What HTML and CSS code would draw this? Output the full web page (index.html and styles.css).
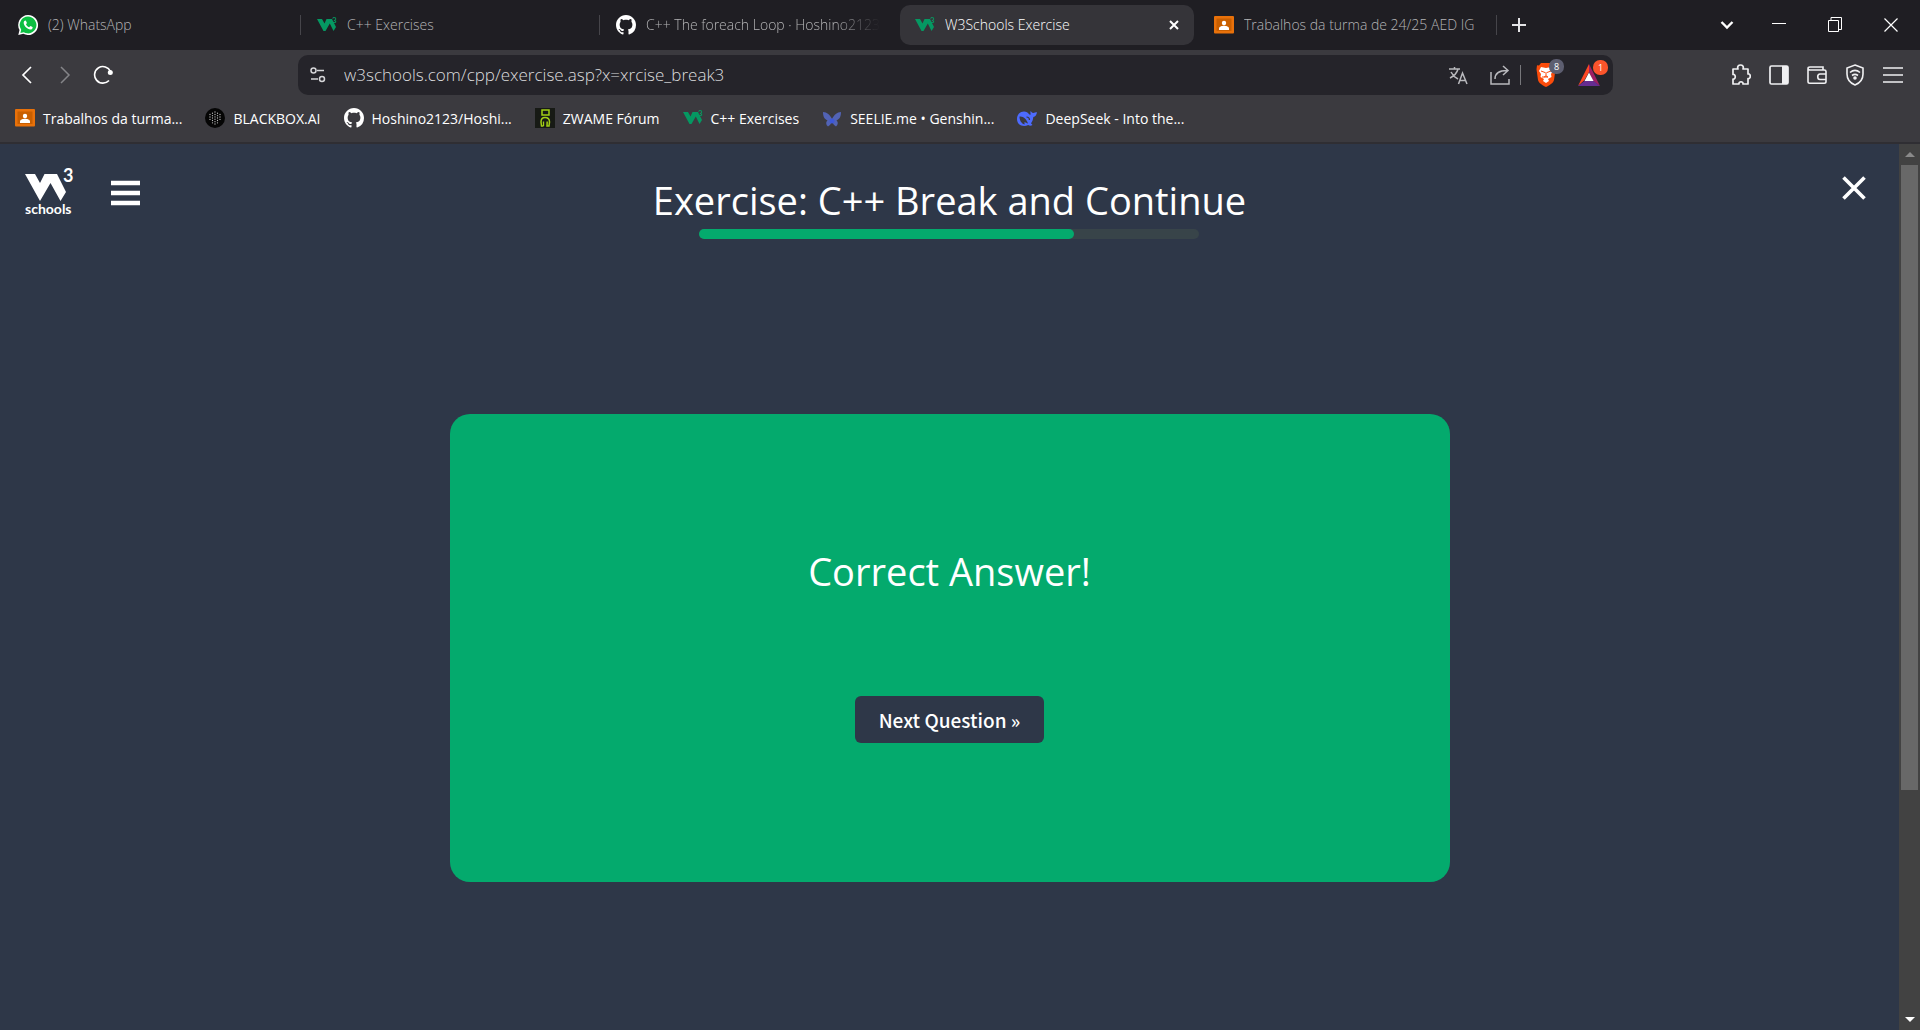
FILE: index.html
```html
<!DOCTYPE html>
<html lang="en">
<head>
<meta charset="utf-8">
<title>W3Schools Exercise</title>
<link rel="stylesheet" href="styles.css">
</head>
<body>
<svg class="defs" aria-hidden="true">
  <symbol id="w3" viewBox="0 0 20 20">
    <path d="M0 4h5l2.500 4.500L9.500 4h5.500l4 8-2.500 4-3.700-7.500L8.500 16H6.500z" fill="#059862"/>
    <text x="15" y="8" font-family="Lato" font-size="8" font-weight="700" fill="#059862">3</text>
  </symbol>
  <symbol id="github" viewBox="0 0 16 16">
    <path fill="#fff" d="M8 0C3.580 0 0 3.580 0 8c0 3.540 2.290 6.530 5.470 7.590.4.070.55-.17.55-.38 0-.19-.01-.82-.01-1.490-2.010.37-2.530-.49-2.690-.94-.09-.23-.48-.94-.82-1.130-.28-.15-.68-.52-.01-.53.63-.01 1.080.58 1.230.82.72 1.210 1.870.87 2.330.66.07-.52.28-.87.51-1.070-1.780-.2-3.640-.89-3.640-3.950 0-.87.31-1.590.82-2.150-.08-.2-.36-1.020.08-2.120 0 0 .67-.21 2.200.82.64-.18 1.320-.27 2-.27s1.360.09 2 .27c1.530-1.040 2.200-.82 2.200-.82.44 1.100.16 1.920.08 2.120.51.56.82 1.270.82 2.150 0 3.070-1.870 3.750-3.650 3.950.29.25.54.73.54 1.480 0 1.070-.01 1.930-.01 2.200 0 .21.15.46.55.38A8.010 8.010 0 0 0 16 8c0-4.420-3.580-8-8-8z"/>
  </symbol>
  <symbol id="classroom" viewBox="0 0 20 20">
    <rect y="1" width="20" height="17.500" rx="1" fill="#e8710a"/>
    <rect x="2.500" y="3.500" width="15" height="12.500" fill="#c95f00"/>
    <circle cx="10" cy="8" r="2.200" fill="#fff"/>
    <path d="M5 15v-1.500c0-2 3-2.800 5-2.800s5 .8 5 2.800V15z" fill="#fff"/>
  </symbol>
</svg>

<header class="browser">
  <div class="tabstrip">
    <nav class="tabs" aria-label="Tabs">
      <a class="tab" href="#">
        <svg class="fav" viewBox="0 0 20 20"><path d="M10 0a10 10 0 1 1-4.700 18.800L.3 20l1.200-5A10 10 0 0 1 10 0z" fill="#fff"/><path d="M10 1.600a8.400 8.400 0 1 1-4.300 15.600L2.400 18l.8-3.200A8.400 8.400 0 0 1 10 1.600z" fill="#0cbf42"/><path d="M7.300 5.500c-.4 0-1.600.7-1.600 2.300 0 3 3.600 6.600 6.700 6.700 1.200 0 2.300-.9 2.300-2.100 0-.3-2-1.300-2.300-1.300s-.9 1.200-1.200 1.200c-.8 0-3-2-3.200-3 0-.3.900-.8.900-1.200 0-.3-.8-2.600-1.600-2.600z" fill="#fff"/></svg>
        <span class="tab-title">(2) WhatsApp</span>
      </a>
      <a class="tab ruled" href="#"><svg class="fav"><use href="#w3"/></svg><span class="tab-title">C++ Exercises</span></a>
      <a class="tab ruled" href="#"><svg class="fav"><use href="#github"/></svg><span class="tab-title faded">C++ The foreach Loop · Hoshino2123</span></a>
      <div class="tab active">
        <svg class="fav"><use href="#w3"/></svg><span class="tab-title">W3Schools Exercise</span>
        <button class="icon-btn tab-close" aria-label="Close tab"><svg width="10" height="10" viewBox="0 0 10 10"><path d="M1 1l8 8M9 1L1 9" stroke="#fff" stroke-width="2"/></svg></button>
      </div>
      <a class="tab" href="#"><svg class="fav"><use href="#classroom"/></svg><span class="tab-title">Trabalhos da turma de 24/25 AED IG</span></a>
      <div class="tab-end"><button class="icon-btn" aria-label="New tab"><svg width="14" height="14" viewBox="0 0 14 14"><path d="M7 0v14M0 7h14" stroke="#e4e4e6" stroke-width="2"/></svg></button></div>
    </nav>
    <div class="window-controls">
      <button class="icon-btn" aria-label="Search tabs"><svg width="14" height="10" viewBox="0 0 14 10"><path d="M1.500 2L7 7.500 12.500 2" fill="none" stroke="#fff" stroke-width="2.400"/></svg></button>
      <button class="icon-btn" aria-label="Minimize"><svg width="14" height="14" viewBox="0 0 14 14"><path d="M0 5.500h14" stroke="#fff"/></svg></button>
      <button class="icon-btn" aria-label="Restore"><svg width="14" height="16" viewBox="0 0 14 16"><path d="M.5 3.500h10v11H.5zM3 3V.5h10.500v12H11" fill="none" stroke="#fff"/></svg></button>
      <button class="icon-btn" aria-label="Close window"><svg width="14" height="14" viewBox="0 0 14 14"><path d="M.5.500l13 13M13.500.500l-13 13" stroke="#fff" stroke-width="1.200"/></svg></button>
    </div>
  </div>

  <div class="toolbar">
    <div class="nav-buttons">
      <button class="icon-btn" aria-label="Back"><svg width="20" height="20" viewBox="0 0 20 20"><path d="M14 2l-8 8 8 8" fill="none" stroke="#fff" stroke-width="1.700"/></svg></button>
      <button class="icon-btn" aria-label="Forward"><svg width="20" height="20" viewBox="0 0 20 20"><path d="M6 2l8 8-8 8" fill="none" stroke="#858589" stroke-width="1.500"/></svg></button>
      <button class="icon-btn" aria-label="Reload"><svg width="20" height="20" viewBox="0 0 20 20"><path d="M17.500 6.500A8.300 8.300 0 1 0 16 15.500" fill="none" stroke="#fff" stroke-width="1.600"/><circle cx="17.300" cy="7.600" r="2.500" fill="#fff"/></svg></button>
    </div>
    <div class="omnibox">
      <svg width="16" height="16" viewBox="0 0 16 16" fill="none" stroke="#d5d5d8" stroke-width="1.500"><circle cx="3.500" cy="3.500" r="2.500"/><path d="M7 3.500h7M1 12h7"/><circle cx="12" cy="12" r="2.500"/></svg>
      <input class="url" type="text" aria-label="Address" value="w3schools.com/cpp/exercise.asp?x=xrcise_break3">
      <button class="icon-btn" aria-label="Translate"><svg width="20" height="20" viewBox="0 0 20 20" fill="none" stroke="#b9b9bd" stroke-width="1.500"><path d="M1 4h11M6.500 2v2M3 7c2 4 5 6 7 7M10 4c-1 4-4 7-8 9M10.500 19l4-11 4.500 11M12 15.500h5.500"/></svg></button>
      <button class="icon-btn share" aria-label="Share"><svg width="20" height="20" viewBox="0 0 20 20" fill="none" stroke="#b9b9bd" stroke-width="1.500"><path d="M1 7v12h18v-5M5 14c0-5 3-8.500 12-8.500M13 1l5 4.500-5 4.500"/></svg></button>
      <button class="icon-btn badged shield" aria-label="Brave Shields"><svg width="20" height="24" viewBox="0 0 20 24"><path d="M5 0h10l2 2.500 2-.2.500 4L18 17c-.5 3-5 5.500-8 7-3-1.500-7.500-4-8-7L.500 6.300l.5-4 2 .2z" fill="#fb4c0b"/><path d="M5 4l5 1 5-1 2 4-2 3 .5 3L12 16l1 2-3 2-3-2 1-2-3.500-2 .5-3-2-3z" fill="#fff"/><path d="M5 8l4 1.500M15 8l-4 1.500M10 9v4l-2 1h4l-2-1M7 13v2" stroke="#fb4c0b" fill="none"/></svg><span class="badge">8</span></button>
      <button class="icon-btn badged" aria-label="Brave Rewards"><svg width="22" height="22" viewBox="0 0 22 22"><path d="M11 0v8l-4.500 8L0 22z" fill="#ff4724"/><path d="M11 0l11 22-7-5-4-9z" fill="#9e1f63"/><path d="M0 22l6.500-5h9L22 22z" fill="#662d91"/><path d="M11 8.500l4.500 8.500h-9z" fill="#fff"/></svg><span class="badge hot">1</span></button>
    </div>
    <div class="tools">
      <button class="icon-btn" aria-label="Extensions"><svg width="20" height="22" viewBox="0 0 20 22" fill="none" stroke="#f0f0f2" stroke-width="1.700"><path d="M2 5h5C6 2.500 7.500 1 9.500 1S13 2.500 12 5h5v5c3-.5 3 5 0 4.500V20h-5c.5-3-4.500-3-4 0H2v-5c3 .5 3-5 0-4.500z" stroke-linejoin="round"/></svg></button>
      <button class="icon-btn" aria-label="Sidebar"><svg width="20" height="20" viewBox="0 0 20 20"><rect x="1" y="1" width="18" height="18" rx="1.500" fill="none" stroke="#f0f0f2" stroke-width="1.700"/><path d="M13 1h6v18h-6z" fill="#f0f0f2"/></svg></button>
      <button class="icon-btn" aria-label="Wallet"><svg width="20" height="20" viewBox="0 0 20 20" fill="none" stroke="#f0f0f2" stroke-width="1.600"><path d="M1 4v12.500c0 1 .7 1.700 1.700 1.700h14.600c1 0 1.700-.7 1.700-1.700V6.500c0-1-.7-1.500-1.700-1.500H3C1.500 5 1 4.500 1 3.500S1.500 2 3 2h13v3M19 9h-6c-3 0-3 5.500 0 5.500h6"/></svg></button>
      <button class="icon-btn" aria-label="VPN"><svg width="20" height="22" viewBox="0 0 20 22" fill="none" stroke="#f0f0f2" stroke-width="1.600"><path d="M10 1l8 3v6c0 5-3 9-8 11-5-2-8-6-8-11V4z"/><path d="M5 8.500c3-2.500 7-2.500 10 0M7 11.500c2-1.500 4-1.500 6 0"/><circle cx="10" cy="14" r="1" fill="#f0f0f2"/></svg></button>
      <button class="icon-btn" aria-label="Menu"><svg width="20" height="18" viewBox="0 0 20 18"><path d="M0 2h20M0 9h20M0 16h20" stroke="#f0f0f2" stroke-width="1.700"/></svg></button>
    </div>
  </div>

  <nav class="bookmarks" aria-label="Bookmarks">
    <a href="#"><svg class="fav"><use href="#classroom"/></svg>Trabalhos da turma...</a>
    <a href="#"><svg class="fav" viewBox="0 0 20 20"><circle cx="10" cy="10" r="10" fill="#050505"/><path d="M10 4v12M7.500 5.200v9.600M12.500 5.200v9.600M5 6.500v7M15 6.500v7" stroke="#b5b5b5" stroke-width="1.300" stroke-linecap="round" stroke-dasharray="0.100 2.300"/></svg>BLACKBOX.AI</a>
    <a href="#"><svg class="fav"><use href="#github"/></svg>Hoshino2123/Hoshi...</a>
    <a href="#"><svg class="fav" viewBox="0 0 20 20"><path d="M0 0h20v20H0z" fill="#171a15"/><path d="M7 2h7v5H7zM8.500 18H6.500l-.5-4c0-3 1-4.500 4-4.500s4.500 1.500 4.500 4.500l-.5 4h-2l.2-4.500" fill="none" stroke="#a3cf16" stroke-width="1.500"/><path d="M8.500 18v-4.500" stroke="#a3cf16" stroke-width="1.300"/></svg>ZWAME Fórum</a>
    <a href="#"><svg class="fav"><use href="#w3"/></svg>C++ Exercises</a>
    <a href="#"><svg class="fav" viewBox="0 0 20 20"><path d="M1 4c4 0 7 3 9 7 2-4 5-7 9-7 0 4-1 7-4.500 8.500 2 1.500 1.500 4.500-.5 6-2-1-3-3-4-5-1 2-2 4-4 5-2-1.500-2.500-4.500-.5-6C2 11 1 8 1 4z" fill="#5263b5"/><circle cx="10" cy="13" r="2.500" fill="#3d58d8"/></svg>SEELIE.me • Genshin...</a>
    <a href="#"><svg class="fav" viewBox="0 0 20 20"><path d="M0 11c0-4.500 3-7.500 7-7.500 1.200 0 2 .3 3 .7 1 .5 1.500 1.500 2.500 2.300 1 .6 1.300-.2 1-1.300-.3-.8-.2-1.500.3-2.200.5 1 1.200 1.800 2.400 2 1.300-.6 2.300-.8 3.800-.8-.4 2.800-1.500 4.300-3.700 4.800-.3 3-1 4.800-2.300 6.300l1.500 1.700c-1.700 1.200-3 .8-4.300 0C6 19.500 0 17 0 11z" fill="#4d6bfe"/><path d="M2.500 8.500C6.500 8 9.500 11 11 15.500c-1.500 0-2.500-1.500-3.500-1.200-.5.500.5 1.700 0 2.200-3-1-5-4-5-8z" fill="#3b3a3f"/><path d="M9.500 9c1.500 0 3 1.200 3 3" fill="none" stroke="#3b3a3f" stroke-width="1.200"/></svg>DeepSeek - Into the...</a>
  </nav>
</header>

<div class="viewport">
  <div class="page">
    <header class="page-head">
      <div class="brand">
        <a class="logo" href="#" aria-label="W3Schools home">
          <svg width="50" height="54" viewBox="0 0 50 54" fill="#fff"><path d="M0 10h10l5 9 4.500-9H32l9 18-5.500 9L25.500 19 15 37z"/><text x="38" y="18" font-family="Lato" font-size="18" font-weight="700">3</text><text x="0" y="50" font-family="Lato" font-size="14" font-weight="700">schools</text></svg>
        </a>
        <button class="icon-btn" aria-label="Open menu"><svg width="30" height="26" viewBox="0 0 30 26"><path d="M0 3h29M0 13h29M0 23h29" stroke="#fff" stroke-width="4.500"/></svg></button>
      </div>
      <div class="heading">
        <h1>Exercise: C++ Break and Continue</h1>
        <div class="progress" role="progressbar" aria-label="Progress" aria-valuenow="75"><div class="progress-fill" style="width:75%"></div></div>
      </div>
      <button class="icon-btn close-page" aria-label="Close exercise"><svg width="24" height="24" viewBox="0 0 24 24"><path d="M1.500 1.500l21 21M22.500 1.500l-21 21" stroke="#fff" stroke-width="3.600"/></svg></button>
    </header>
    <main class="card">
      <h2>Correct Answer!</h2>
      <button class="next">Next Question »</button>
    </main>
  </div>
  <div class="scrollbar" aria-hidden="true">
    <svg width="10" height="5" viewBox="0 0 10 5"><path d="M5 0l5 5H0z" fill="#8a8a8a"/></svg>
    <div class="track"><div class="thumb"></div></div>
    <svg width="10" height="5" viewBox="0 0 10 5"><path d="M0 0h10L5 5z" fill="#fff"/></svg>
  </div>
</div>
</body>
</html>
```

FILE: styles.css
```css
* { box-sizing: border-box; }

body {
  margin: 0;
  min-height: 100vh;
  display: flex;
  flex-direction: column;
  background: #2e3748;
  color: #fff;
  font-family: "Open Sans", "Noto Sans", sans-serif;
}

a { color: inherit; text-decoration: none; }
.defs { display: none; }

.icon-btn {
  display: flex;
  align-items: center;
  justify-content: center;
  flex: none;
  padding: 0;
  border: 0;
  background: none;
  color: inherit;
}

.fav { width: 20px; height: 20px; flex: none; }

/* Tab strip */
.tabstrip {
  display: flex;
  justify-content: space-between;
  height: 50px;
  background: #1f1e23;
}
.tabs {
  display: flex;
  flex: 0 1 1540px;
  min-width: 0;
  gap: 5px;
  padding: 5px 0 5px 3px;
}
.tab {
  position: relative;
  display: flex;
  align-items: center;
  gap: 10px;
  flex: 0 1 294px;
  min-width: 0;
  height: 40px;
  padding: 0 15px;
  border-radius: 10px;
  color: #b4b4b6;
  font-size: 14px;
  font-weight: 300;
}
.ruled::before,
.tab-end::before {
  content: "";
  position: absolute;
  left: -2px;
  top: 10px;
  width: 1px;
  height: 20px;
  background: #46454a;
}
.tab-title { flex: 1; overflow: hidden; line-height: 20px; white-space: nowrap; }
.faded {
  -webkit-mask-image: linear-gradient(to right, #000 80%, transparent);
  mask-image: linear-gradient(to right, #000 80%, transparent);
}
.active { background: #353439; color: #fff; }
.tab-end { position: relative; display: flex; padding-left: 14px; }

.window-controls { display: flex; padding-right: 1px; }
.window-controls .icon-btn { width: 56px; }
.window-controls .icon-btn:first-child { width: 48px; }

/* Toolbar */
.toolbar {
  display: flex;
  height: 50px;
  padding: 5px 17px;
  background: #3b3a3f;
}
.nav-buttons { display: flex; gap: 18px; flex: 0 0 281px; }
.omnibox {
  display: flex;
  align-items: center;
  flex: 1;
  min-width: 0;
  padding: 0 13px 0 12px;
  border-radius: 10px;
  background: #25242a;
}
.url {
  flex: 1;
  min-width: 0;
  margin: 0 18px;
  padding: 0;
  border: 0;
  outline: 0;
  background: none;
  color: #dcdcde;
  font: 300 17px/22px "Open Sans", sans-serif;
}
.share { margin-left: 22px; padding-right: 10px; border-right: 1px solid #77777b; }
.badged { position: relative; }
.shield { margin: 0 22px 0 15px; }
.badge {
  position: absolute;
  top: -4px;
  right: -8px;
  width: 15px;
  border-radius: 7px;
  background: #5d5e70;
  color: #fff;
  font: 9px/15px "Open Sans", sans-serif;
}
.hot { background: #fb542b; }
.tools {
  display: flex;
  justify-content: flex-end;
  gap: 18px;
  flex: 0 0 290px;
}

/* Bookmarks */
.bookmarks {
  display: flex;
  align-items: center;
  gap: 23px;
  height: 44px;
  padding: 0 15px 6px;
  border-bottom: 2px solid #2f2e33;
  background: #3b3a3f;
  font-size: 14px;
  white-space: nowrap;
}
.bookmarks a { display: flex; align-items: center; gap: 8px; }

/* Page */
.viewport { display: flex; flex: 1; }
.page { flex: 1; min-width: 0; padding-bottom: 148px; }
.page-head {
  display: grid;
  grid-template-columns: 1fr auto 1fr;
  padding: 20px 25px 0;
}
.brand { display: flex; align-items: flex-start; gap: 36px; }
.brand .icon-btn { margin-top: 16px; }
.heading {
  display: flex;
  flex-direction: column;
  align-items: center;
  padding-top: 8px;
}
h1, h2 { margin: 0; font-size: 38px; font-weight: 400; line-height: 57px; }
.progress {
  width: 500px;
  max-width: 100%;
  height: 10px;
  border-radius: 5px;
  background: #384449;
}
.progress-fill { height: 10px; border-radius: 5px; background: #04aa6d; }
.close-page { align-self: start; justify-self: end; margin: 12px 8px 0 0; }

.card {
  display: flex;
  flex-direction: column;
  align-items: center;
  gap: 96px;
  max-width: 1000px;
  margin: 175px auto 0;
  padding: 129px 20px 139px;
  border-radius: 20px;
  background: #04aa6d;
}
.next {
  padding: 0 24px;
  border: 0;
  border-radius: 6px;
  background: #2e3748;
  color: #fff;
  font: 500 19px/47px "Noto Sans CJK JP", sans-serif;
}

/* Scrollbar */
.scrollbar {
  display: flex;
  flex-direction: column;
  align-items: center;
  gap: 8px;
  width: 21px;
  padding: 8px 0;
  background: #424242;
}
.track { flex: 1; }
.thumb { width: 17px; height: 74%; background: #686868; }
```
